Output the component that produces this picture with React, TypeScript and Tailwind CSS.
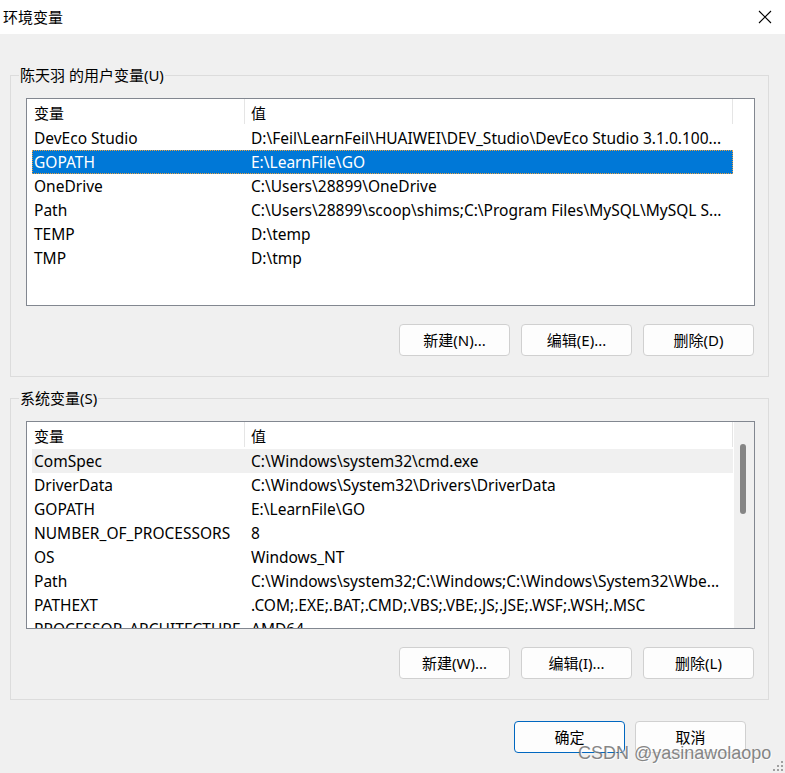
import React from 'react';

type Row = { name: string; value: string };

const userVars: Row[] = [
  { name: 'DevEco Studio', value: 'D:\\Feil\\LearnFeil\\HUAIWEI\\DEV_Studio\\DevEco Studio 3.1.0.100...' },
  { name: 'GOPATH', value: 'E:\\LearnFile\\GO' },
  { name: 'OneDrive', value: 'C:\\Users\\28899\\OneDrive' },
  { name: 'Path', value: 'C:\\Users\\28899\\scoop\\shims;C:\\Program Files\\MySQL\\MySQL S...' },
  { name: 'TEMP', value: 'D:\\temp' },
  { name: 'TMP', value: 'D:\\tmp' },
];

const sysVars: Row[] = [
  { name: 'ComSpec', value: 'C:\\Windows\\system32\\cmd.exe' },
  { name: 'DriverData', value: 'C:\\Windows\\System32\\Drivers\\DriverData' },
  { name: 'GOPATH', value: 'E:\\LearnFile\\GO' },
  { name: 'NUMBER_OF_PROCESSORS', value: '8' },
  { name: 'OS', value: 'Windows_NT' },
  { name: 'Path', value: 'C:\\Windows\\system32;C:\\Windows;C:\\Windows\\System32\\Wbe...' },
  { name: 'PATHEXT', value: '.COM;.EXE;.BAT;.CMD;.VBS;.VBE;.JS;.JSE;.WSF;.WSH;.MSC' },
  { name: 'PROCESSOR_ARCHITECTURE', value: 'AMD64' },
];

function VarList({ rows, selected, hovered, scrollbar }: { rows: Row[]; selected?: number; hovered?: number; scrollbar?: boolean }) {
  return (
    <div className="h-[208px] border border-[#828790] bg-white flex overflow-hidden">
      <div className="w-[706px] flex flex-col pl-[5px]">
        {/* header */}
        <div className="h-[27px] flex shrink-0 text-[15px] text-black">
          <div className="w-[213px] pl-[2px] pt-[3px] border-r border-[#e5e5e5] h-[25px]">变量</div>
          <div className="flex-1 pl-[6px] pt-[3px] border-r border-[#e5e5e5] h-[25px]">值</div>
        </div>
        {rows.map((r, i) => {
          const sel = i === selected;
          const hov = i === hovered;
          return (
            <div
              key={i}
              className={`h-[24px] shrink-0 flex items-center pt-[2px] whitespace-nowrap text-[15.5px] ${sel ? 'bg-[#0078d7] text-white border border-dotted border-[#e8a040]' : hov ? 'bg-[#f0f0f0] text-black border border-transparent' : 'text-black border border-transparent'}`}
            >
              <div className="w-[212px] pl-[1px] overflow-hidden">{r.name}</div>
              <div className="flex-1 pl-[6px] overflow-hidden">{r.value}</div>
            </div>
          );
        })}
      </div>
      <div className="flex-1 flex justify-end">
        {scrollbar && (
          <div className="w-[20px] h-full bg-[#f0f0f0] flex justify-center pt-[22px]">
            <div className="w-[6px] h-[70px] bg-[#858585] rounded-[3px] ml-[-2px]" />
          </div>
        )}
      </div>
    </div>
  );
}

function Btn({ label, primary }: { label: string; primary?: boolean }) {
  return (
    <button
      className={`w-[111px] h-[32px] rounded-[4px] bg-[#fdfdfd] text-[15px] text-black flex items-center justify-center ${primary ? 'border border-[#0067c0]' : 'border border-[#d0d0d0]'}`}
    >
      {label}
    </button>
  );
}

function Group({ title, children }: { title: string; children: React.ReactNode }) {
  return (
    <fieldset className="border border-[#dcdcdc] pl-[15px] pr-[13px] pb-[20px] pt-[13px] ml-[10px] mr-[16px]">
      <legend className="ml-[-7px] px-[1px] text-[15px] leading-[20px] text-black">{title}</legend>
      {children}
    </fieldset>
  );
}

export default function App() {
  return (
    <div
      className="w-[785px] h-[773px] bg-[#f0f0f0] relative overflow-hidden select-none"
      style={{ fontFamily: '"Noto Sans", "Noto Sans CJK SC", sans-serif' }}
    >
      {/* title bar */}
      <div className="h-[34px] bg-white flex items-center justify-between pl-[3px] pr-[13px]">
        <span className="text-[15px] text-black">环境变量</span>
        <svg width="14" height="14" viewBox="0 0 14 14">
          <path d="M1 1L13 13M13 1L1 13" stroke="#000" strokeWidth="1.1" />
        </svg>
      </div>

      <div className="pt-[31px] flex flex-col gap-[11px]">
        <Group title="陈天羽 的用户变量(U)">
          <VarList rows={userVars} selected={1} />
          <div className="flex justify-end gap-[11px] mt-[18px] pr-[1px]">
            <Btn label="新建(N)..." />
            <Btn label="编辑(E)..." />
            <Btn label="删除(D)" />
          </div>
        </Group>
        <Group title="系统变量(S)">
          <VarList rows={sysVars} hovered={0} scrollbar />
          <div className="flex justify-end gap-[11px] mt-[18px] pr-[1px]">
            <Btn label="新建(W)..." />
            <Btn label="编辑(I)..." />
            <Btn label="删除(L)" />
          </div>
        </Group>
      </div>

      <div className="flex justify-end gap-[10px] pr-[39px] mt-[21px]">
        <Btn label="确定" primary />
        <Btn label="取消" />
      </div>

      {/* watermark */}
      <div
        className="absolute left-[578px] top-[740px] text-[18px] text-[#7a7a7a] opacity-90 whitespace-nowrap"
        style={{ fontFamily: '"Liberation Sans", Arial, sans-serif', textShadow: '1px 1px 0 #ffffff' }}
      >
        CSDN @yasinawolaopo
      </div>
      {/* resize grip */}
      <svg className="absolute right-[1px] bottom-[1px]" width="11" height="11" viewBox="0 0 11 11">
        <rect x="8" y="0" width="2" height="2" fill="#a0a0a0" />
        <rect x="4" y="4" width="2" height="2" fill="#a0a0a0" />
        <rect x="8" y="4" width="2" height="2" fill="#a0a0a0" />
        <rect x="0" y="8" width="2" height="2" fill="#a0a0a0" />
        <rect x="4" y="8" width="2" height="2" fill="#a0a0a0" />
        <rect x="8" y="8" width="2" height="2" fill="#a0a0a0" />
      </svg>
    </div>
  );
}
